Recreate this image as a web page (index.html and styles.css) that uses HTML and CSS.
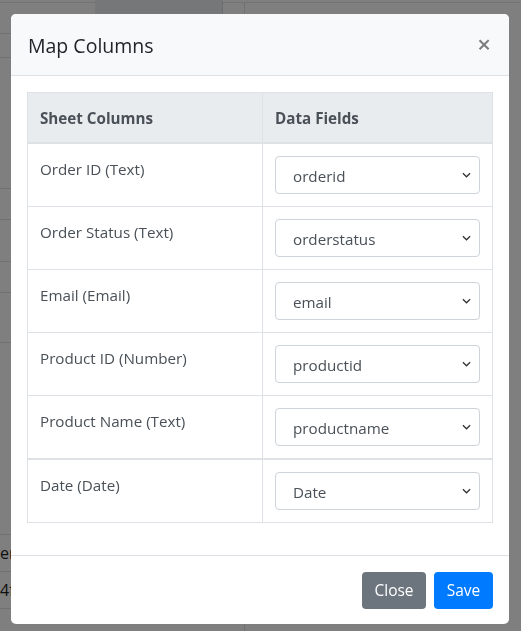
FILE: index.html
```html
<!DOCTYPE html>
<html>
<head>
<meta charset="utf-8">
<link rel="stylesheet" href="styles.css">
</head>
<body>
<div class="page">
  <div class="page-top"><div class="page-tab"></div></div>
  <div class="page-col">
    <div class="prow h31"></div>
    <div class="prow h24"></div>
    <div class="prow h131"></div>
    <div class="prow h31"></div>
    <div class="prow h42"></div>
    <div class="prow h31"></div>
    <div class="prow h50"></div>
    <div class="prow h192"></div>
    <div class="prow h37 ptext">en</div>
    <div class="prow h37 ptext">4f</div>
  </div>
</div>
<div class="backdrop"></div>
<div class="modal">
  <div class="modal-content">
    <div class="modal-header">
      <h5 class="modal-title">Map Columns</h5>
      <span class="close">&times;</span>
    </div>
    <div class="modal-body">
      <table class="map-table">
        <thead>
          <tr><th>Sheet Columns</th><th>Data Fields</th></tr>
        </thead>
        <tbody>
          <tr><td>Order ID (Text)</td><td><div class="select">orderid</div></td></tr>
          <tr><td>Order Status (Text)</td><td><div class="select">orderstatus</div></td></tr>
          <tr><td>Email (Email)</td><td><div class="select">email</div></td></tr>
          <tr><td>Product ID (Number)</td><td><div class="select">productid</div></td></tr>
          <tr class="thick"><td>Product Name (Text)</td><td><div class="select">productname</div></td></tr>
          <tr><td>Date (Date)</td><td><div class="select">Date</div></td></tr>
        </tbody>
      </table>
    </div>
    <div class="modal-footer">
      <button class="btn btn-secondary">Close</button>
      <button class="btn btn-primary">Save</button>
    </div>
  </div>
</div>
</body>
</html>
```
FILE: styles.css
```css
* { box-sizing: border-box; }
html, body { margin: 0; padding: 0; }
body {
  width: 521px;
  height: 631px;
  overflow: hidden;
  background: #fff;
  font-family: "Open Sans", "Noto Sans", sans-serif;
  color: #212529;
}
.page { width: 521px; height: 631px; }
.page-top { height: 3px; border-bottom: 1px solid #e6e6e6; position: relative; }
.page-tab {
  position: absolute; left: 95px; top: 0; width: 128px; height: 14px;
  background: #eceef0; border-right: 1px solid #d8d8d8; border-top-right-radius: 3px;
}
.page-col { width: 245px; border-right: 1px solid #e2e2e2; height: 628px; }
.prow { border-bottom: 1px solid #dee2e6; }
.h24 { height: 24px; } .h31 { height: 31px; } .h37 { height: 37px; }
.h42 { height: 42px; } .h50 { height: 50px; } .h131 { height: 131px; } .h192 { height: 192px; }
.ptext { font-size: 16px; line-height: 37px; color: #222; white-space: nowrap; }
.backdrop { position: fixed; inset: 0; background: rgba(0,0,0,0.5); }

.modal { position: fixed; left: 11px; top: 14px; width: 498px; }
.modal-content {
  background: #fff;
  border-radius: 5px;
  overflow: hidden;
  height: 610px;
  display: flex;
  flex-direction: column;
}
.modal-header {
  height: 63px;
  background: #f8f9fa;
  border-bottom: 1px solid #dee2e6;
  display: flex;
  align-items: center;
  justify-content: space-between;
  padding: 0 18px 0 17px;
}
.modal-title { margin: 0; font-size: 19.5px; font-weight: 500; color: #212529; line-height: 1; padding-top: 2px; }
.close { font-size: 24px; font-weight: 600; color: #000; opacity: 0.5; line-height: 1; margin-top: -1px; }
.modal-body { padding: 16px 16px 32px 16px; }
.map-table { width: 466px; border-collapse: collapse; font-size: 15.2px; }
.map-table th, .map-table td { border: 1px solid #dee2e6; text-align: left; vertical-align: top; padding: 12px 12px; }
.map-table th:first-child, .map-table td:first-child { width: 235px; }
.map-table thead th {
  background: #e9ecef; color: #495057; font-weight: 700; height: 51px; line-height: 24px; padding-top: 13px;
  border-bottom: 2px solid #dee2e6;
}
.map-table td { height: 63px; line-height: 24px; color: #495057; padding-top: 13px; }
.map-table td:last-child { padding-top: 12px; }
.map-table tr.thick td { border-bottom: 2px solid #dee2e6; }
.select {
  height: 38px;
  border: 1px solid #ced4da;
  border-radius: 4px;
  padding: 7px 30px 6px 17px;
  font-size: 15.2px;
  line-height: 24px;
  color: #495057;
  background: #fff url("data:image/svg+xml,%3Csvg xmlns='http://www.w3.org/2000/svg' width='10' height='6' viewBox='0 0 10 6'%3E%3Cpath d='M1 1l4 4 4-4' fill='none' stroke='%23333' stroke-width='1.4'/%3E%3C/svg%3E") no-repeat right 8px center;
  background-size: 9px 6px;
}
.modal-footer {
  margin-top: auto;
  border-top: 1px solid #dee2e6;
  height: 70px;
  display: flex;
  justify-content: flex-end;
  align-items: center;
  gap: 8px;
  padding: 1px 16px 0;
}
.btn {
  border: none; border-radius: 4px; color: #fff; font-family: inherit;
  font-size: 15.5px; height: 37px; padding: 0 12px; line-height: 37px;
}
.btn-secondary { background: #6c757d; width: 64px; }
.btn-primary { background: #007bff; width: 59px; }
```
